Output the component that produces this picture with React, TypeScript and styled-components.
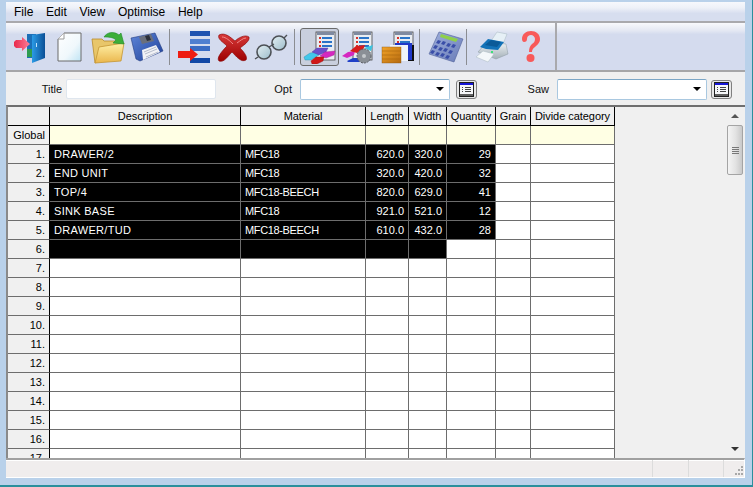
import React from 'react';
import styled, { createGlobalStyle } from 'styled-components';

// Data
const COLUMNS = [
  { title: 'Description', width: 191, align: 'left', spacing: 0.3 },
  { title: 'Material', width: 125, align: 'left', spacing: -0.35 },
  { title: 'Length', width: 43, align: 'right', spacing: 0 },
  { title: 'Width', width: 38, align: 'right', spacing: 0 },
  { title: 'Quantity', width: 49, align: 'right', spacing: 0 },
  { title: 'Grain', width: 35, align: 'left', spacing: 0 },
  { title: 'Divide category', width: 84, align: 'left', spacing: 0 }
] as const;

const ROWS = [
  ['DRAWER/2', 'MFC18', '620.0', '320.0', '29', '', ''],
  ['END UNIT', 'MFC18', '320.0', '420.0', '32', '', ''],
  ['TOP/4', 'MFC18-BEECH', '820.0', '629.0', '41', '', ''],
  ['SINK BASE', 'MFC18', '921.0', '521.0', '12', '', ''],
  ['DRAWER/TUD', 'MFC18-BEECH', '610.0', '432.0', '28', '', '']
];

const GRID_COLUMNS = `42px ${COLUMNS.map(c => c.width + 'px').join(' ')}`;
const EMPTY_ROWS = [7, 8, 9, 10, 11, 12, 13, 14, 15, 16, 17];

const GlobalStyle = createGlobalStyle`
  html, body {
    margin: 0;
    padding: 0;
    background: #b9d1ea;
    overflow: hidden;
  }
  * {
    box-sizing: border-box;
  }
`;

const Window = styled.div`
  width: 753px;
  height: 487px;
  padding: 2px 7px 7px 6px;
  border-bottom: 2px solid #2b8f9c;
  border-right: 1px solid #2b8f9c;
  display: flex;
  flex-direction: column;
  font-family: "Liberation Sans", Arial, sans-serif;
  color: #000;
`;

const MenuBar = styled.div`
  height: 19px;
  flex: none;
  display: flex;
  align-items: center;
  gap: 12.7px;
  padding: 1px 0 0 8px;
  font-size: 12px;
  background: linear-gradient(#f6f8fc 0, #eef1f8 30%, #d7deef 60%, #d7deef 100%);
`;

const Toolbar = styled.div`
  height: 51px;
  flex: none;
  display: flex;
  align-items: center;
  padding: 0 0 0 4px;
  border-top: 2px solid #a9a9ad;
  border-bottom: 2px solid #a6a6a8;
  background: linear-gradient(#f8f9fc 0, #e4e8f3 16%, #d4dbee 24%, #d4dbee 100%);
`;

const ToolButton = styled.div<{ $active?: boolean }>`
  width: 39px;
  height: 38px;
  flex: none;
  display: flex;
  align-items: center;
  justify-content: center;
  border-radius: 3px;
  border: 1px solid ${p => (p.$active ? '#6b6b6b' : 'transparent')};
  background: ${p => (p.$active ? '#c9cfdd' : 'transparent')};
`;

const ToolSeparator = styled.div<{ $left: number; $right: number }>`
  width: 1px;
  height: 36px;
  flex: none;
  margin: 0 ${p => p.$right}px 0 ${p => p.$left}px;
  background: #8b8d92;
`;

const ToolbarEnd = styled.div`
  width: 2px;
  height: 100%;
  flex: none;
  margin-left: 5px;
  background: #a9a9ad;
`;

const FormBar = styled.div`
  height: 33px;
  flex: none;
  display: flex;
  align-items: center;
  padding-top: 1px;
  background: #f0f0f0;
  font-size: 11px;
`;

const FieldLabel = styled.span<{ $width: number; $gap: number }>`
  width: ${p => p.$width}px;
  flex: none;
  text-align: right;
  padding-right: ${p => p.$gap}px;
  color: #111;
`;

const TextBox = styled.div`
  width: 150px;
  height: 20px;
  flex: none;
  background: #fff;
  border: 1px solid #dfe6ee;
  border-radius: 2px;
`;

const Combo = styled.div`
  width: 150px;
  height: 21px;
  flex: none;
  display: flex;
  align-items: center;
  justify-content: flex-end;
  padding-right: 5px;
  background: #fff;
  border: 1px solid #a9c8e0;
  border-top-color: #7ba6c6;
  border-radius: 2px;
`;

const ComboArrow = styled.span`
  width: 0;
  height: 0;
  border-left: 4px solid transparent;
  border-right: 4px solid transparent;
  border-top: 4px solid #000;
`;

const ListButton = styled.div<{ $gap: number }>`
  width: 21px;
  height: 19px;
  flex: none;
  display: flex;
  align-items: center;
  justify-content: center;
  margin-left: ${p => p.$gap}px;
  background: #e8e8e8;
  border: 1px solid #808080;
  border-radius: 3px;
`;

const GridArea = styled.div`
  flex: 1;
  min-height: 0;
  display: flex;
  background: #f0f0f0;
  border-top: 2px solid #6f6f6f;
  border-left: 2px solid #8a8a8a;
  overflow: hidden;
`;

const Table = styled.div`
  flex: 1;
  min-width: 0;
  height: 100%;
  overflow: hidden;
  font-size: 11px;
`;

const Row = styled.div`
  display: grid;
  grid-template-columns: ${GRID_COLUMNS};
  height: 19px;
  width: max-content;
`;

const Cell = styled.div<{ $align?: string; $spacing?: number; $selected?: boolean; $global?: boolean }>`
  height: 19px;
  padding: 0 4px 1px 4px;
  display: flex;
  align-items: center;
  justify-content: ${p => (p.$align === 'right' ? 'flex-end' : 'flex-start')};
  letter-spacing: ${p => p.$spacing ?? 0}px;
  white-space: nowrap;
  overflow: hidden;
  background: ${p => (p.$selected ? '#000' : p.$global ? '#ffffe4' : '#fff')};
  color: ${p => (p.$selected ? '#fff' : '#000')};
  border-right: 1px solid #6d6d6d;
  border-bottom: 1px solid #6d6d6d;
`;

const HeaderCell = styled.div`
  height: 19px;
  padding-bottom: 1px;
  display: flex;
  align-items: center;
  justify-content: center;
  white-space: nowrap;
  overflow: hidden;
  background: #f0f0f0;
  letter-spacing: -0.05px;
  border-right: 1px solid #000;
  border-bottom: 1px solid #000;
`;

const RowHead = styled.div`
  height: 19px;
  padding: 0 4px 1px 0;
  display: flex;
  align-items: center;
  justify-content: flex-end;
  background: #f0f0f0;
  border-right: 1px solid #000;
  border-bottom: 1px solid #6d6d6d;
`;

const ScrollBar = styled.div`
  width: 16px;
  flex: none;
  margin-right: 2px;
  display: flex;
  flex-direction: column;
  align-items: stretch;
  background: #f0f0f0;
`;

const ScrollArrow = styled.div<{ $down?: boolean }>`
  height: 18px;
  flex: none;
  display: flex;
  align-items: center;
  justify-content: center;

  &::after {
    content: '';
    border-left: 4px solid transparent;
    border-right: 4px solid transparent;
    ${p => (p.$down ? 'border-top: 4px solid #333;' : 'border-bottom: 4px solid #555;')}
  }
`;

const ScrollThumb = styled.div`
  height: 50px;
  flex: none;
  display: flex;
  flex-direction: column;
  align-items: center;
  justify-content: center;
  gap: 1px;
  border: 1px solid #a4a4a4;
  border-radius: 2px;
  background: linear-gradient(90deg, #f4f4f4, #e2e2e2 55%, #c9c9c9);
`;

const ThumbLine = styled.span`
  width: 7px;
  height: 1px;
  background: #777;
`;

const ScrollTrack = styled.div`
  flex: 1;
`;

const StatusBar = styled.div`
  height: 20px;
  flex: none;
  display: flex;
  border-top: 2px solid #a0a0a0;
  border-bottom: 1px solid #fff;
  border-right: 1px solid #fff;
  background: #f0eded;
  box-shadow: inset 0 1px 0 #fff;
`;

const StatusPane = styled.div<{ $width?: number }>`
  flex: ${p => (p.$width ? `0 0 ${p.$width}px` : '1')};
  border-right: ${p => (p.$width === 20 ? 'none' : '1px solid #dcdcdc')};
  display: flex;
  align-items: flex-end;
  justify-content: flex-end;
`;

// Toolbar drawings
const ExitIcon = () => (
  <svg width="34" height="34" viewBox="0 0 34 34">
    <defs>
      <linearGradient id="doorLeaf" x1="0" x2="1" y1="0" y2="0">
        <stop offset="0" stopColor="#2b9be6" />
        <stop offset="1" stopColor="#0a4f96" />
      </linearGradient>
      <linearGradient id="exitArrow" x1="0" x2="1" y1="0" y2="0">
        <stop offset="0" stopColor="#e92a4c" />
        <stop offset="1" stopColor="#fa7f98" />
      </linearGradient>
    </defs>
    <rect x="14" y="4" width="9" height="24" fill="#1b6fb8" />
    <rect x="14" y="19" width="6" height="8" fill="#2e9c50" />
    <path d="M19 5l13-2v25L19 33z" fill="url(#doorLeaf)" />
    <rect x="23" y="13" width="1" height="4" fill="#bfe3ff" />
    <path d="M1 12l2-2h6V7l8 7-8 7v-3H3l-2-2z" fill="url(#exitArrow)" />
  </svg>
);

const NewIcon = () => (
  <svg width="28" height="32" viewBox="0 0 28 32">
    <defs>
      <linearGradient id="pageFill" x1="0" x2="1" y1="0" y2="1">
        <stop offset="0" stopColor="#ffffff" />
        <stop offset="0.6" stopColor="#f0f8fc" />
        <stop offset="1" stopColor="#bfe4f4" />
      </linearGradient>
    </defs>
    <path d="M9 2h17v28H3V8z" fill="url(#pageFill)" stroke="#6a6a6a" strokeWidth="1" />
    <path d="M9 2v6H3" fill="#fff" stroke="#9a9a9a" strokeWidth="1" />
  </svg>
);

const OpenIcon = () => (
  <svg width="34" height="34" viewBox="0 0 34 34">
    <defs>
      <linearGradient id="folderFill" x1="0" x2="0" y1="0" y2="1">
        <stop offset="0" stopColor="#fff1a8" />
        <stop offset="1" stopColor="#eab64c" />
      </linearGradient>
    </defs>
    <path d="M1 9h10l2 2h15v8l-24 14H4z" fill="#e8c66a" stroke="#b98c2c" strokeWidth="0.8" />
    <path d="M4 33L8 17l25-4-3 18z" fill="url(#folderFill)" stroke="#c49632" strokeWidth="0.8" />
    <path d="M13 7c3-5 10-6 15-2l2-2 3 11-11-1 3-3c-3-3-8-3-12-3z" fill="#3cae3a" stroke="#1f8a2a" strokeWidth="0.6" />
  </svg>
);

const SaveIcon = () => (
  <svg width="34" height="30" viewBox="0 0 34 30">
    <defs>
      <linearGradient id="diskFill" x1="0" x2="1" y1="0" y2="1">
        <stop offset="0" stopColor="#5f86d8" />
        <stop offset="1" stopColor="#1d3f98" />
      </linearGradient>
    </defs>
    <path d="M1 6L25 1l8 18-23 10-4-2z" fill="url(#diskFill)" stroke="#223a80" strokeWidth="0.6" />
    <path d="M9 5l12-3 3 7-12 3z" fill="#6a6f7c" />
    <path d="M15 4l4-1 2 5-4 1z" fill="#2b2f3a" />
    <path d="M12 18l14-5 4 7-17 8z" fill="#f1f2f6" />
    <path d="M14 20l12-5M15 22l12-5M16 25l12-5" stroke="#9aa3b8" strokeWidth="0.7" />
  </svg>
);

const InsertRowsIcon = () => (
  <svg width="34" height="34" viewBox="0 0 34 34">
    <rect x="13" y="1" width="20" height="5" fill="#1e52b0" />
    <rect x="13" y="9" width="20" height="5" fill="#4f7fd0" />
    <rect x="13" y="16" width="20" height="5" fill="#3a6cc4" />
    <rect x="13" y="28" width="20" height="5" fill="#1148a6" />
    <path d="M1 21h12v-3l8 6.500-8 6.500v-3H1z" fill="#ee1c12" />
  </svg>
);

const DeleteIcon = () => (
  <svg width="34" height="30" viewBox="0 0 34 30">
    <defs>
      <linearGradient id="crossFill" x1="0" x2="0" y1="0" y2="1">
        <stop offset="0" stopColor="#d83a3a" />
        <stop offset="1" stopColor="#9c0000" />
      </linearGradient>
    </defs>
    <path d="M3 3C9 0 14 5 19 9 22 6 29 2 33 5 34 9 28 13 24 16 28 20 32 25 30 28 25 31 20 24 16 20 12 24 8 31 3 29 0 26 6 19 11 14 7 10 1 7 3 3z" fill="url(#crossFill)" stroke="#860000" strokeWidth="0.6" />
    <path d="M6 5c4 0 8 4 11 7M30 6c-3 0-6 3-9 5" stroke="#f08a8a" strokeWidth="1" fill="none" />
  </svg>
);

const GlassesIcon = () => (
  <svg width="36" height="26" viewBox="0 0 36 26">
    <defs>
      <linearGradient id="lensFill" x1="0" x2="1" y1="0" y2="1">
        <stop offset="0" stopColor="#e4eff3" />
        <stop offset="1" stopColor="#9dbdcb" />
      </linearGradient>
    </defs>
    <circle cx="10" cy="18" r="7" fill="url(#lensFill)" stroke="#4c5055" strokeWidth="1.600" />
    <circle cx="25" cy="9" r="7" fill="url(#lensFill)" stroke="#4c5055" strokeWidth="1.600" />
    <path d="M15 13l5-3M4 23l-3 2M30 4l3-3" stroke="#4c5055" strokeWidth="1.400" fill="none" />
  </svg>
);

const ListSheet = ({ x = 13 }: { x?: number }) => (
  <>
    <rect x={x} y="2" width="19" height="28" fill="#e9edf2" stroke="#444" strokeWidth="0.8" />
    <rect x={x + 1} y="2" width="17" height="3" fill="#7f8aa0" />
    <rect x={x + 3} y="7" width="2" height="2" fill="#d9322a" />
    <rect x={x + 6} y="7" width="10" height="2" fill="#2a74c8" />
    <rect x={x + 3} y="11" width="2" height="2" fill="#d9322a" />
    <rect x={x + 6} y="11" width="10" height="2" fill="#2a74c8" />
    <rect x={x + 3} y="15" width="2" height="2" fill="#d9322a" />
    <rect x={x + 6} y="15" width="10" height="2" fill="#2a74c8" />
  </>
);

const CutListIcon = () => (
  <svg width="34" height="34" viewBox="0 0 34 34">
    <ListSheet />
    <path d="M1 27l6-4 8-1 1 3-8 5H2z" fill="#42c8ea" stroke="#2a8ca8" strokeWidth="0.4" />
    <path d="M9 22l5-4h11l-2 4-7 3z" fill="#6a50cc" stroke="#4a3aa0" strokeWidth="0.4" />
    <path d="M17 26l5-4 10-1-1 4-8 3z" fill="#d528c0" stroke="#9c1c8c" strokeWidth="0.4" />
    <path d="M8 31l5-4h8l-1 4-6 3H9z" fill="#d01818" stroke="#981010" strokeWidth="0.4" />
  </svg>
);

const SawIcon = () => (
  <svg width="34" height="34" viewBox="0 0 34 34">
    <ListSheet x={11} />
    <path d="M0 26l6-4 7-1-1 4-7 3z" fill="#d528c0" />
    <path d="M5 31l6-3h9l-3 4H6z" fill="#2040c8" />
    <path d="M8 21l6-5 9-1-2 5-6 3z" fill="#d81c1c" />
    <path d="M22 18l9-3-2 6z" fill="#3cc4e0" />
    <circle cx="22" cy="26" r="7" fill="#8a8f96" stroke="#5a5e64" strokeWidth="1" strokeDasharray="2 1" />
    <circle cx="22" cy="26" r="2" fill="#c4c8cc" />
  </svg>
);

const BoardIcon = () => (
  <svg width="34" height="34" viewBox="0 0 34 34">
    <defs>
      <linearGradient id="woodFill" x1="0" x2="1" y1="0" y2="1">
        <stop offset="0" stopColor="#f2a328" />
        <stop offset="1" stopColor="#b56a10" />
      </linearGradient>
    </defs>
    <ListSheet />
    <rect x="16" y="15" width="17" height="16" fill="#101010" />
    <rect x="14" y="13" width="17" height="17" fill="#2038c8" />
    <rect x="9" y="15" width="18" height="16" fill="#f0f4fa" />
    <rect x="1" y="17" width="19" height="16" fill="url(#woodFill)" stroke="#8a5410" strokeWidth="0.4" />
    <path d="M1 21h19M1 25h19M1 29h19" stroke="#a9640f" strokeWidth="0.6" />
  </svg>
);

const CalculatorIcon = () => (
  <svg width="36" height="34" viewBox="0 0 36 34">
    <defs>
      <linearGradient id="calcBody" x1="0" x2="1" y1="0" y2="1">
        <stop offset="0" stopColor="#9fb0dc" />
        <stop offset="1" stopColor="#6a7cb8" />
      </linearGradient>
    </defs>
    <path d="M11 2l24 7-9 23L1 24z" fill="url(#calcBody)" stroke="#4f5f98" strokeWidth="0.6" />
    <path d="M13 4l17 5-2 3-16-5z" fill="#8fd04a" />
    <g fill="#3a4ea8">
      <path d="M10 10l3 1-2 3-3-1zM15 11l3 1-2 3-3-1zM20 13l3 1-2 3-3-1zM25 14l3 1-2 3-3-1z" />
      <path d="M7 15l3 1-2 3-3-1zM12 17l3 1-2 3-3-1zM17 18l3 1-2 3-3-1zM22 20l3 1-2 3-3-1z" />
      <path d="M4 20l3 1-2 3-3-1zM9 22l3 1-2 3-3-1zM14 23l3 1-2 3-3-1zM19 25l3 1-2 3-3-1z" />
    </g>
  </svg>
);

const PrinterIcon = () => (
  <svg width="34" height="32" viewBox="0 0 34 32">
    <defs>
      <linearGradient id="printerBody" x1="0" x2="0" y1="0" y2="1">
        <stop offset="0" stopColor="#f0f4f6" />
        <stop offset="1" stopColor="#a4b0b8" />
      </linearGradient>
    </defs>
    <path d="M16 10l6-9 10 2-4 10z" fill="#e6f0f6" stroke="#a8b8c0" strokeWidth="0.5" />
    <path d="M3 21l9-10 19 2 2 10-12 5z" fill="url(#printerBody)" stroke="#8a98a0" strokeWidth="0.5" />
    <path d="M5 16l8-8 16 3-6 8-12-1z" fill="#1272b8" />
    <path d="M10 14l6-5 10 2-4 5z" fill="#0b5a98" />
    <path d="M1 26l7-6 11 3-6 8z" fill="#f4f8fa" stroke="#a8b8c0" strokeWidth="0.5" />
    <rect x="16" y="20" width="2" height="2" fill="#3ce07a" />
  </svg>
);

const HelpIcon = () => (
  <svg width="22" height="34" viewBox="0 0 22 34">
    <path d="M2 9c0-5 4-8 9-8 5 0 9 3 9 8 0 4-3 6-5 8-2 1-3 3-3 5H9c0-4 1-6 3-8 2-1 3-3 3-5 0-2-2-4-4-4-2 0-4 1-4 4 0 2-1 3-3 3-1 0-2-1-2-3z" fill="#f85a5a" />
    <circle cx="10.500" cy="28" r="4" fill="#f85a5a" />
  </svg>
);

const ListGlyph = () => (
  <svg width="15" height="15" viewBox="0 0 15 15">
    <rect x="0.500" y="0.500" width="14" height="14" fill="#f6f7f9" stroke="#202020" />
    <rect x="1" y="1" width="13" height="2" fill="#1616d8" />
    <path d="M3 5.500h1M6 5.500h6M3 7.500h1M6 7.500h6M3 9.500h1M6 9.500h6" stroke="#444" />
    <rect x="1" y="12" width="13" height="2" fill="#606060" />
  </svg>
);

const Grip = () => (
  <svg width="12" height="12" viewBox="0 0 12 12">
    <g fill="#a8a8a8">
      <rect x="9" y="1" width="2" height="2" />
      <rect x="6" y="4" width="2" height="2" />
      <rect x="9" y="4" width="2" height="2" />
      <rect x="3" y="8" width="2" height="2" />
      <rect x="6" y="8" width="2" height="2" />
      <rect x="9" y="8" width="2" height="2" />
    </g>
  </svg>
);

const App: React.FC = () => {
  return (
    <Window>
      <GlobalStyle />
      <MenuBar>
        <span>File</span>
        <span>Edit</span>
        <span>View</span>
        <span>Optimise</span>
        <span>Help</span>
      </MenuBar>

      <Toolbar>
        <ToolButton><ExitIcon /></ToolButton>
        <ToolButton><NewIcon /></ToolButton>
        <ToolButton><OpenIcon /></ToolButton>
        <ToolButton><SaveIcon /></ToolButton>
        <ToolSeparator $left={3} $right={4} />
        <ToolButton><InsertRowsIcon /></ToolButton>
        <ToolButton><DeleteIcon /></ToolButton>
        <ToolButton><GlassesIcon /></ToolButton>
        <ToolSeparator $left={3} $right={5} />
        <ToolButton $active><CutListIcon /></ToolButton>
        <ToolButton><SawIcon /></ToolButton>
        <ToolButton><BoardIcon /></ToolButton>
        <ToolSeparator $left={2} $right={6} />
        <ToolButton><CalculatorIcon /></ToolButton>
        <ToolSeparator $left={1} $right={5} />
        <ToolButton><PrinterIcon /></ToolButton>
        <ToolButton><HelpIcon /></ToolButton>
        <ToolbarEnd />
      </Toolbar>

      <FormBar>
        <FieldLabel $width={60} $gap={4}>Title</FieldLabel>
        <TextBox />
        <FieldLabel $width={84} $gap={8}>Opt</FieldLabel>
        <Combo><ComboArrow /></Combo>
        <ListButton $gap={6}><ListGlyph /></ListButton>
        <FieldLabel $width={80} $gap={8}>Saw</FieldLabel>
        <Combo><ComboArrow /></Combo>
        <ListButton $gap={4}><ListGlyph /></ListButton>
      </FormBar>

      <GridArea>
        <Table>
          <Row>
            <HeaderCell />
            {COLUMNS.map(col => (
              <HeaderCell key={col.title}>{col.title}</HeaderCell>
            ))}
          </Row>
          <Row>
            <RowHead>Global</RowHead>
            {COLUMNS.map(col => (
              <Cell key={col.title} $global />
            ))}
          </Row>
          {ROWS.map((row, i) => (
            <Row key={i}>
              <RowHead>{i + 1}.</RowHead>
              {row.map((value, j) => (
                <Cell key={j} $align={COLUMNS[j].align} $spacing={COLUMNS[j].spacing} $selected={j < 5}>{value}</Cell>
              ))}
            </Row>
          ))}
          <Row>
            <RowHead>6.</RowHead>
            {COLUMNS.map((col, j) => (
              <Cell key={col.title} $selected={j < 4} />
            ))}
          </Row>
          {EMPTY_ROWS.map(n => (
            <Row key={n}>
              <RowHead>{n}.</RowHead>
              {COLUMNS.map(col => (
                <Cell key={col.title} />
              ))}
            </Row>
          ))}
        </Table>
        <ScrollBar>
          <ScrollArrow />
          <ScrollThumb>
            <ThumbLine />
            <ThumbLine />
            <ThumbLine />
            <ThumbLine />
          </ScrollThumb>
          <ScrollTrack />
          <ScrollArrow $down />
        </ScrollBar>
      </GridArea>

      <StatusBar>
        <StatusPane />
        <StatusPane $width={36} />
        <StatusPane $width={35} />
        <StatusPane $width={20}><Grip /></StatusPane>
      </StatusBar>
    </Window>
  );
};

export default App;
